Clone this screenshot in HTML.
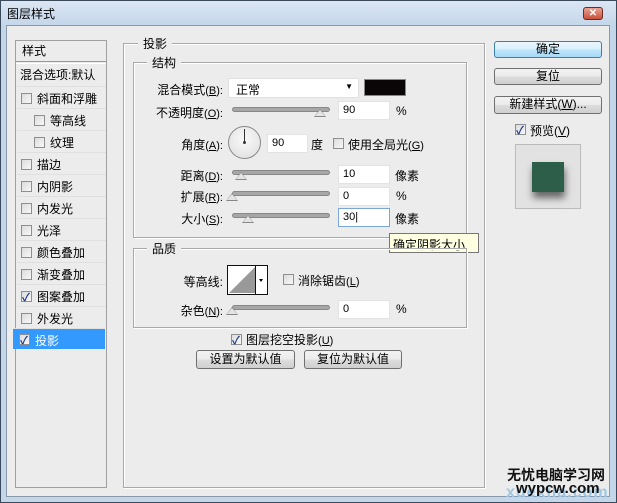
<!DOCTYPE html>
<html><head><meta charset="utf-8"><style>
*{margin:0;padding:0;box-sizing:border-box}
body{width:617px;height:503px;overflow:hidden;font-family:"Liberation Sans","Noto Sans CJK SC",sans-serif;font-size:12px;color:#000;background:#b9d1ea;position:relative}
.a{position:absolute;white-space:nowrap}
.r{position:absolute;white-space:nowrap;text-align:right;width:120px}
.r small{font-size:11px}
.win{position:absolute;left:0;top:0;width:617px;height:503px;border:1px solid #3a4a5a;background:linear-gradient(#dbe6f3,#c4d6ea 25px,#c4d6ea);}
.body{position:absolute;left:6px;top:25px;width:604px;height:472px;background:#ececec;border:1px solid #8a9aab}
.cb{position:absolute;width:11px;height:11px;border:1px solid #8e8f8f;background:linear-gradient(135deg,#dcdcdc,#f8f8f8)}
.cb.on::after{content:"✓";position:absolute;left:0;top:-3px;font-size:11px;color:#1e3a8a;font-weight:bold}
.grp{position:absolute;border:1px solid #a9a9a9;box-shadow:1px 1px 0 #fff inset,1px 1px 0 #fff}
.lg{position:absolute;background:#ececec;padding:0 5px}
.inp{position:absolute;background:#fff;border:1px solid #e3e3e3;height:19px;padding:2px 4px;font-size:11px}
.track{position:absolute;height:5px;border-radius:3px;background:#a7a7a7;border:1px solid #888}
.thumb{position:absolute;width:0;height:0;border-left:6px solid transparent;border-right:6px solid transparent;border-bottom:8px solid #888}
.thumb::after{content:"";position:absolute;left:-5px;top:1px;border-left:5px solid transparent;border-right:5px solid transparent;border-bottom:6px solid #e4e4e4}
.btn{position:absolute;border:1px solid #707070;border-radius:3px;background:linear-gradient(#f2f2f2,#ebebeb 50%,#dddddd 51%,#cfcfcf);text-align:center;line-height:15px}
.row{position:absolute;left:1px;width:89px;height:22px;border-top:1px solid #e0e0e0}
</style></head><body>
<div class="win"></div>
<div class="a" style="left:7px;top:5px;font-size:12px">图层样式</div>
<div class="a" style="left:583px;top:7px;width:20px;height:13px;border:1px solid #6d2a22;border-radius:3px;background:linear-gradient(#e8a293,#c9503a);color:#fff;font-size:10px;text-align:center;line-height:11px;font-weight:bold">✕</div>
<div class="body"></div>

<div class="a" style="left:15px;top:40px;width:92px;height:448px;border:1px solid #a0a0a0;background:#ececec">
<div class="a" style="left:6px;top:1px">样式</div>
<div class="a" style="left:0;top:20px;width:90px;border-top:1px solid #999;border-bottom:1px solid #fff;height:3px"></div>
<div class="a" style="left:4px;top:25px">混合选项:默认</div>
</div>
<div class="a" style="left:16px;top:86px;width:90px">
<div class="row" style="top:0"><div class="cb" style="left:4px;top:6px"></div><span class="a" style="left:20px;top:3px">斜面和浮雕</span></div>
<div class="row" style="top:22px"><div class="cb" style="left:17px;top:6px"></div><span class="a" style="left:33px;top:3px">等高线</span></div>
<div class="row" style="top:44px"><div class="cb" style="left:17px;top:6px"></div><span class="a" style="left:33px;top:3px">纹理</span></div>
<div class="row" style="top:66px"><div class="cb" style="left:4px;top:6px"></div><span class="a" style="left:20px;top:3px">描边</span></div>
<div class="row" style="top:88px"><div class="cb" style="left:4px;top:6px"></div><span class="a" style="left:20px;top:3px">内阴影</span></div>
<div class="row" style="top:110px"><div class="cb" style="left:4px;top:6px"></div><span class="a" style="left:20px;top:3px">内发光</span></div>
<div class="row" style="top:132px"><div class="cb" style="left:4px;top:6px"></div><span class="a" style="left:20px;top:3px">光泽</span></div>
<div class="row" style="top:154px"><div class="cb" style="left:4px;top:6px"></div><span class="a" style="left:20px;top:3px">颜色叠加</span></div>
<div class="row" style="top:176px"><div class="cb" style="left:4px;top:6px"></div><span class="a" style="left:20px;top:3px">渐变叠加</span></div>
<div class="row" style="top:198px"><div class="cb on" style="left:4px;top:6px"></div><span class="a" style="left:20px;top:3px">图案叠加</span></div>
<div class="row" style="top:220px"><div class="cb" style="left:4px;top:6px"></div><span class="a" style="left:20px;top:3px">外发光</span></div>
<div class="row" style="top:242px;background:#3399ff;color:#fff;height:21px;left:-3px;width:92px"><div class="cb on" style="left:6px;top:5px"></div><span class="a" style="left:22px;top:3px">投影</span></div>
</div>

<div class="grp" style="left:123px;top:43px;width:362px;height:445px"></div>
<div class="lg" style="left:138px;top:35px">投影</div>
<div class="grp" style="left:133px;top:62px;width:334px;height:176px"></div>
<div class="lg" style="left:147px;top:54px">结构</div>

<div class="r" style="left:103px;top:81px">混合模式<small>(<u>B</u>):</small></div>
<div class="a" style="left:228px;top:78px;width:131px;height:20px;background:#fff;border:1px solid #e0e0e0;padding:2px 7px">正常<span style="position:absolute;right:5px;top:3px;font-size:8px">▼</span></div>
<div class="a" style="left:364px;top:79px;width:42px;height:17px;background:#0a0506;border:1px solid #888"></div>

<div class="r" style="left:103px;top:104px">不透明度<small>(<u>O</u>):</small></div>
<div class="track" style="left:232px;top:107px;width:98px"></div><div class="thumb" style="left:314px;top:109px"></div>
<div class="inp" style="left:338px;top:101px;width:52px">90</div><div class="a" style="left:396px;top:104px">%</div>

<div class="r" style="left:103px;top:136px">角度<small>(<u>A</u>):</small></div>
<div class="a" style="left:228px;top:126px;width:33px;height:33px;border-radius:50%;border:1px solid #888;background:radial-gradient(circle at 50% 40%,#fafafa,#dcdcdc)"></div>
<div class="a" style="left:244px;top:129px;width:1px;height:14px;background:#333"></div>
<div class="a" style="left:243px;top:141px;width:3px;height:3px;border-radius:50%;background:#333"></div>
<div class="inp" style="left:267px;top:134px;width:41px">90</div>
<div class="a" style="left:311px;top:136px">度</div>
<div class="cb" style="left:333px;top:138px"></div><div class="a" style="left:348px;top:136px">使用全局光<small style="font-size:11px">(<u>G</u>)</small></div>

<div class="r" style="left:103px;top:167px">距离<small>(<u>D</u>):</small></div>
<div class="track" style="left:232px;top:170px;width:98px"></div><div class="thumb" style="left:235px;top:172px"></div>
<div class="inp" style="left:338px;top:165px;width:52px">10</div><div class="a" style="left:395px;top:167px">像素</div>

<div class="r" style="left:103px;top:188px">扩展<small>(<u>R</u>):</small></div>
<div class="track" style="left:232px;top:191px;width:98px"></div><div class="thumb" style="left:226px;top:193px"></div>
<div class="inp" style="left:338px;top:187px;width:52px">0</div><div class="a" style="left:396px;top:189px">%</div>

<div class="r" style="left:103px;top:210px">大小<small>(<u>S</u>):</small></div>
<div class="track" style="left:232px;top:213px;width:98px"></div><div class="thumb" style="left:242px;top:215px"></div>
<div class="inp" style="left:338px;top:208px;width:52px;border-color:#7aa7d8">30|</div><div class="a" style="left:395px;top:210px">像素</div>

<div class="a" style="left:389px;top:233px;width:90px;height:20px;background:#ffffe1;border:1px solid #777;padding:2px 3px">确定阴影大小</div>

<div class="grp" style="left:133px;top:248px;width:334px;height:80px;border-top:1px solid #a9a9a9"></div>
<div class="lg" style="left:147px;top:240px">品质</div>
<div class="r" style="left:103px;top:273px">等高线:</div>
<div class="a" style="left:227px;top:265px;width:41px;height:30px;border:1px solid #111;background:#fff">
<svg width="39" height="28" style="position:absolute;left:0;top:0"><polygon points="1,27 27,1 27,27" fill="#999"/><rect x="28" y="0" width="11" height="28" fill="#fff"/><line x1="27.5" y1="0" x2="27.5" y2="28" stroke="#111"/><polygon points="31,13 35,13 33,16" fill="#000"/></svg></div>
<div class="cb" style="left:283px;top:274px"></div><div class="a" style="left:298px;top:272px">消除锯齿<small style="font-size:11px">(<u>L</u>)</small></div>
<div class="r" style="left:103px;top:302px">杂色<small>(<u>N</u>):</small></div>
<div class="track" style="left:232px;top:305px;width:98px"></div><div class="thumb" style="left:226px;top:307px"></div>
<div class="inp" style="left:338px;top:300px;width:52px">0</div><div class="a" style="left:396px;top:302px">%</div>

<div class="cb on" style="left:231px;top:334px"></div><div class="a" style="left:246px;top:331px">图层挖空投影<small style="font-size:11px">(<u>U</u>)</small></div>
<div class="btn" style="left:196px;top:350px;width:99px;height:19px;line-height:17px">设置为默认值</div>
<div class="btn" style="left:304px;top:350px;width:98px;height:19px;line-height:17px">复位为默认值</div>

<div class="btn" style="left:494px;top:41px;width:108px;height:17px;border-color:#3c7fb1;background:linear-gradient(#eaf6fd,#d9f0fc 50%,#bee6fd 51%,#a7d9f5)">确定</div>
<div class="btn" style="left:494px;top:68px;width:108px;height:17px">复位</div>
<div class="btn" style="left:494px;top:96px;width:108px;height:18px">新建样式(<u>W</u>)...</div>
<div class="cb on" style="left:515px;top:124px"></div><div class="a" style="left:530px;top:122px">预览(<u>V</u>)</div>
<div class="a" style="left:515px;top:144px;width:66px;height:65px;border:1px solid #bbb;background:#e2e2e2"></div>
<div class="a" style="left:532px;top:162px;width:32px;height:30px;background:#2c5e4a;box-shadow:1px 6px 7px rgba(0,0,0,.55)"></div>

<div class="a" style="left:506px;top:484px;font-size:16px;font-weight:bold;color:#9ec7e6;letter-spacing:1px">xuexila.com</div>
<div class="a" style="left:507px;top:465px;font-size:14px;font-weight:bold;color:#111">无忧电脑学习网</div>
<div class="a" style="left:516px;top:480px;font-size:15px;font-weight:bold;color:#111">wypcw.com</div>
</body></html>
